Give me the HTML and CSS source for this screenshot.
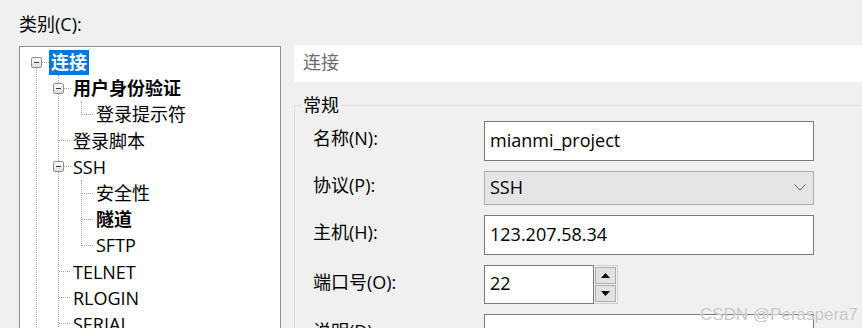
FILE: index.html
```html
<!DOCTYPE html>
<html lang="zh-CN">
<head>
<meta charset="UTF-8">
<meta name="viewport" content="width=device-width, initial-scale=1.0">
<title>会话属性</title>
<link rel="stylesheet" href="styles.css">
</head>
<body>

<div class="dialog">
    <div class="cat-label">类别(C):</div>
    <div class="main">
        <div class="tree">
            <ul class="root">
                <li>
                    <div class="row"><span class="exp"></span><span class="label sel">连接</span></div>
                    <ul class="sub">
                        <li>
                            <div class="row"><span class="exp"></span><span class="label bold">用户身份验证</span></div>
                            <ul class="sub closed">
                                <li><div class="row"><span class="leaf"></span><span class="label">登录提示符</span></div></li>
                            </ul>
                        </li>
                        <li><div class="row"><span class="leaf"></span><span class="label">登录脚本</span></div></li>
                        <li>
                            <div class="row"><span class="exp"></span><span class="label">SSH</span></div>
                            <ul class="sub closed">
                                <li><div class="row"><span class="leaf"></span><span class="label">安全性</span></div></li>
                                <li><div class="row"><span class="leaf"></span><span class="label bold">隧道</span></div></li>
                                <li><div class="row"><span class="leaf"></span><span class="label">SFTP</span></div></li>
                            </ul>
                        </li>
                        <li><div class="row"><span class="leaf"></span><span class="label">TELNET</span></div></li>
                        <li><div class="row"><span class="leaf"></span><span class="label">RLOGIN</span></div></li>
                        <li><div class="row"><span class="leaf"></span><span class="label">SERIAL</span></div></li>
                    </ul>
                </li>
            </ul>
        </div>

        <div class="panel">
            <div class="panel-title">连接</div>
            <fieldset class="group">
                <legend>常规</legend>
                <div class="form">
                    <label>名称(N):</label>
                    <input class="text" type="text" value="mianmi_project">

                    <label>协议(P):</label>
                    <div class="combo">
                        <span>SSH</span>
                        <svg width="12" height="7" viewBox="0 0 12 7"><path d="M0.5 0.5 L6 6 L11.5 0.5" fill="none" stroke="#606060" stroke-width="1"/></svg>
                    </div>

                    <label>主机(H):</label>
                    <input class="text" type="text" value="123.207.58.34">

                    <label>端口号(O):</label>
                    <div class="spin">
                        <input class="text port" type="text" value="22">
                        <div class="spin-btns">
                            <span class="spin-btn"><svg width="9" height="5" viewBox="0 0 9 5"><path d="M0 5 L4.5 0 L9 5 Z" fill="#000"/></svg></span>
                            <span class="spin-btn"><svg width="9" height="5" viewBox="0 0 9 5"><path d="M0 0 L4.5 5 L9 0 Z" fill="#000"/></svg></span>
                        </div>
                    </div>

                    <label>说明(D):</label>
                    <input class="text" type="text" value="">
                </div>
            </fieldset>
        </div>
    </div>
    <div class="watermark">CSDN @Peraspera7</div>
</div>

</body>
</html>
```

FILE: styles.css
```css
html, body {
    margin: 0;
    padding: 0;
    height: 100%;
    overflow: hidden;
}
body {
    background-color: #f0f0f0;
    font-family: "Open Sans", "Noto Sans CJK SC", sans-serif;
    font-size: 18px;
    color: #000000;
}
.dialog {
    position: relative;
    height: 328px;
    overflow: hidden;
}
.cat-label {
    padding: 11px 0 0 19px;
    line-height: 26px;
}
.main {
    display: flex;
    align-items: flex-start;
}

/* tree */
.tree {
    width: 260px;
    height: 320px;
    margin: 9px 0 0 19px;
    border: 1px solid #8f8f8f;
    background-color: #ffffff;
    flex-shrink: 0;
}
.tree ul {
    list-style: none;
    margin: 0;
    position: relative;
}
.root {
    padding: 2px 0 0 11px;
}
.root::before {
    content: '';
    position: absolute;
    left: 16px;
    top: 21px;
    bottom: 0;
    border-left: 1px dotted #a0a0a0;
}
.sub {
    padding: 0 0 0 22px;
}
.sub .sub {
    padding-left: 23px;
}
.sub::before {
    content: '';
    position: absolute;
    left: 27px;
    top: 0;
    bottom: 0;
    border-left: 1px dotted #a0a0a0;
}
.sub .sub::before {
    left: 28px;
}
.sub.closed::before {
    bottom: 13px;
}
.row {
    height: 26.2px;
    display: flex;
    align-items: center;
}
.exp {
    position: relative;
    width: 11px;
    height: 11px;
    box-sizing: border-box;
    border: 1px solid #8e8f8f;
    border-radius: 2px;
    background: linear-gradient(#ffffff, #dcdcdc);
    margin-right: 7px;
    flex-shrink: 0;
    z-index: 1;
}
.exp::after {
    content: '';
    position: absolute;
    left: 2px;
    top: 4px;
    width: 5px;
    height: 1px;
    background-color: #1e3f6b;
}
.exp::before {
    content: '';
    position: absolute;
    left: 10px;
    top: 4px;
    width: 7px;
    border-top: 1px dotted #a0a0a0;
}
.leaf {
    position: relative;
    width: 11px;
    height: 1px;
    margin-right: 7px;
    flex-shrink: 0;
}
.leaf::before {
    content: '';
    position: absolute;
    left: 6px;
    top: 0;
    width: 11px;
    border-top: 1px dotted #a0a0a0;
}
.label {
    padding: 0 2px;
    line-height: 24px;
    white-space: nowrap;
}
.bold {
    font-weight: bold;
}
.sel {
    background-color: #0078d7;
    color: #ffffff;
    font-weight: bold;
    line-height: 25px;
}

/* right panel */
.panel {
    flex: 1;
    margin: 8px -40px 0 13px;
}
.panel-title {
    height: 37px;
    line-height: 35px;
    padding-left: 9px;
    background-color: #ffffff;
    color: #6d6d6d;
}
.group {
    margin: 11px 0 0 0;
    padding: 0 0 0 6px;
    border: 1px solid #dcdcdc;
}
.group legend {
    padding: 0 2px;
    line-height: 24px;
}
.form {
    display: grid;
    grid-template-columns: 171px 330px;
    grid-auto-rows: auto;
    row-gap: 10px;
    align-items: center;
    margin: 4px 0 0 12px;
}
.form label {
    line-height: 24px;
    padding-bottom: 6px;
    white-space: nowrap;
}
.text {
    box-sizing: border-box;
    height: 40px;
    width: 330px;
    margin: 0;
    padding: 0 5px 3px 5px;
    border: 1px solid #7a7a7a;
    background-color: #ffffff;
    font-family: inherit;
    font-size: 18px;
    color: #000000;
    outline: none;
}
.combo {
    box-sizing: border-box;
    height: 34px;
    display: flex;
    align-items: center;
    justify-content: space-between;
    padding: 0 7px 2px 5px;
    border: 1px solid #adadad;
    background-color: #e5e5e5;
}
.spin {
    display: flex;
    height: 39px;
}
.text.port {
    width: 110px;
    height: 39px;
}
.spin-btns {
    display: flex;
    flex-direction: column;
    gap: 1px;
    padding: 1px;
    border: 1px solid #d0d0d0;
    border-left: none;
    background-color: #f0f0f0;
}
.spin-btn {
    flex: 1;
    width: 19px;
    display: flex;
    align-items: center;
    justify-content: center;
    border: 1px solid #adadad;
    background-color: #e1e1e1;
}
.watermark {
    position: absolute;
    right: 4px;
    bottom: 3px;
    font-family: "Liberation Sans", sans-serif;
    font-size: 17px;
    color: #c6c6c6;
    text-shadow: 0 0 1px #ffffff;
}
```
